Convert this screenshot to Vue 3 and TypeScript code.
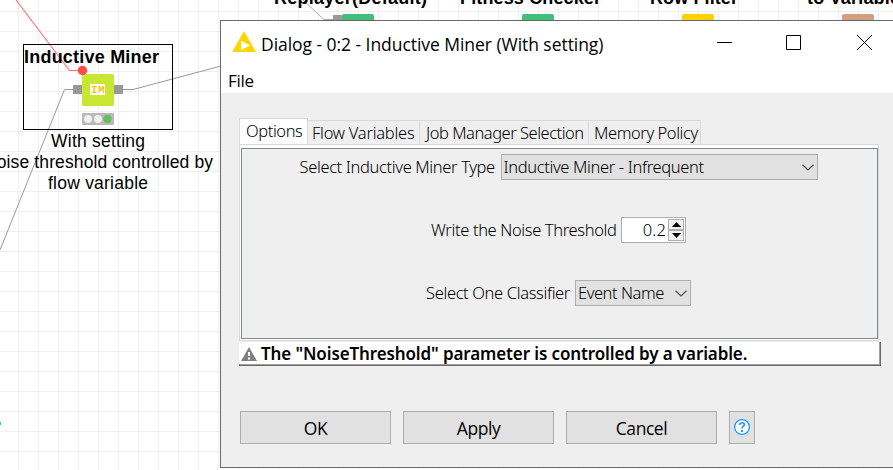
<script setup lang="ts">
import { ref } from 'vue'

interface PartialNode {
  label: string
  labelX: number
  labelWidth: number
  x: number
  color: string
}

const partialNodes: PartialNode[] = [
  { label: 'Replayer(Default)', labelX: 274, labelWidth: 153, x: 342, color: '#41be78' },
  { label: 'Fitness Checker', labelX: 460, labelWidth: 141, x: 522, color: '#41be78' },
  { label: 'Row Filter', labelX: 650, labelWidth: 88, x: 682, color: '#ffd100' },
  { label: 'to Variable', labelX: 807, labelWidth: 93, x: 842, color: '#d2a080' },
]

const tabs = [
  { id: 'options', label: 'Options' },
  { id: 'flow', label: 'Flow Variables' },
  { id: 'job', label: 'Job Manager Selection' },
  { id: 'memory', label: 'Memory Policy' },
]
const activeTab = ref('options')
const actions = ['OK', 'Apply', 'Cancel']
</script>

<template>
  <div class="screen">
    <svg class="canvas" width="893" height="470" viewBox="0 0 893 470">
      <defs>
        <pattern id="grid" width="20" height="20" x="18" y="11" patternUnits="userSpaceOnUse">
          <path d="M0 0h20v1H1v19H0z" fill="#efefef" />
        </pattern>
      </defs>
      <rect width="893" height="470" fill="#fff" />
      <rect width="893" height="470" fill="url(#grid)" />

      <g fill="none" stroke="#999" stroke-width="1">
        <path d="M0 250L64.500 89.500H74" />
        <path d="M122 89.500H133L221 66" />
        <path d="M303 0L324 19.500H334" stroke="#aaa" />
      </g>
      <path d="M16 0L69.500 70.500H80" fill="none" stroke="#ff7070" stroke-width="1.100" />

      <g class="node-name">
        <text x="24" y="63" textLength="135">Inductive Miner</text>
        <text v-for="n in partialNodes" :key="n.label" :x="n.labelX" y="4" :textLength="n.labelWidth">{{ n.label }}</text>
      </g>
      <rect x="333" y="15" width="9" height="9" fill="#999" />
      <rect v-for="n in partialNodes" :key="n.x" :x="n.x" y="14" width="32" height="32" rx="2" :fill="n.color" />

      <rect x="23.500" y="44.500" width="149" height="85" fill="none" stroke="#000" />
      <rect x="73" y="85" width="9" height="9" fill="#999" />
      <rect x="114" y="85" width="9" height="9" fill="#999" />
      <rect x="82" y="74" width="32" height="32" rx="1.500" fill="#c8e632" />
      <circle cx="82.500" cy="70.500" r="4.700" fill="#ff4b4b" />
      <rect x="90" y="84" width="15" height="11" fill="#fff" />
      <text class="node-glyph" x="91" y="93" textLength="13.500">IM</text>
      <rect x="82" y="113" width="32" height="12" rx="1" fill="#b9b9b9" />
      <circle cx="88" cy="119" r="4" fill="#f0f0f0" />
      <circle cx="98" cy="119" r="4" fill="#f0f0f0" />
      <circle cx="107.500" cy="119" r="4.200" fill="#64be5a" />

      <g class="node-note">
        <text x="51" y="147" textLength="94">With setting</text>
        <text x="-16" y="168" textLength="229">Noise threshold controlled by</text>
        <text x="48" y="189" textLength="100">flow variable</text>
      </g>
      <rect x="0" y="422" width="1" height="3" fill="#2ab4ff" />
    </svg>

    <section class="dialog">
      <header class="titlebar">
        <svg class="logo" width="26" height="24" viewBox="0 0 26 24">
          <path d="M13 1L25 22H1z" fill="#ffd500" />
          <path d="M10 10.500L19 15.500L10 20z" fill="#fff" />
        </svg>
        <h1 class="title">Dialog - 0:2 - Inductive Miner (With setting)</h1>
        <div class="window-controls">
          <svg width="15" height="15" viewBox="0 0 15 15"><path d="M0 7.500H15" /></svg>
          <svg width="15" height="15" viewBox="0 0 15 15"><path d="M.5.5h14v14H.5z" /></svg>
          <svg width="15" height="15" viewBox="0 0 15 15"><path d="M0 0L15 15M15 0L0 15" /></svg>
        </div>
      </header>
      <nav class="menubar"><span>File</span></nav>

      <div class="body">
        <div class="tabs">
          <div
            v-for="t in tabs"
            :key="t.id"
            class="tab"
            :class="[t.id, { active: activeTab === t.id }]"
            @click="activeTab = t.id"
          ><span>{{ t.label }}</span></div>
        </div>
        <div class="pane">
          <div class="pane-inner">
            <div class="row">
              <span class="l1">Select Inductive Miner Type</span>
              <div class="combo wide">
                <span class="v1">Inductive Miner - Infrequent</span>
                <svg width="12" height="7" viewBox="0 0 12 7"><path d="M.5.7L6 6L11.500.7" /></svg>
              </div>
            </div>
            <div class="row">
              <span class="l2">Write the Noise Threshold</span>
              <div class="spinner">
                <span class="number">0.2</span>
                <div class="steps">
                  <div class="step"><svg width="9" height="5" viewBox="0 0 9 5"><path d="M4.500 0L9 5H0z" /></svg></div>
                  <div class="step"><svg width="9" height="5" viewBox="0 0 9 5"><path d="M4.500 5L9 0H0z" /></svg></div>
                </div>
              </div>
            </div>
            <div class="row">
              <span class="l3">Select One Classifier</span>
              <div class="combo narrow">
                <span class="v3">Event Name</span>
                <svg width="12" height="7" viewBox="0 0 12 7"><path d="M.5.7L6 6L11.500.7" /></svg>
              </div>
            </div>
          </div>
        </div>

        <div class="status">
          <svg width="16" height="14" viewBox="0 0 16 14">
            <path d="M8 0L16 14H0z" fill="#808080" />
            <path d="M7 5h2v4H7zM7 10.500h2v2H7z" fill="#fff" />
          </svg>
          <span>The "NoiseThreshold" parameter is controlled by a variable.</span>
        </div>

        <footer class="actions">
          <button v-for="a in actions" :key="a" class="btn" :class="a.toLowerCase()"><span>{{ a }}</span></button>
          <button class="btn help">
            <svg width="18" height="18" viewBox="0 0 18 18">
              <circle cx="9" cy="9" r="7.400" fill="#fff" stroke="#1e9bff" stroke-width="1.300" />
              <path d="M6.700 7V6.400C6.700 4.200 11.400 4.100 11.400 6.500C11.400 8.300 9 8.300 9 10.500" fill="none" stroke="#1e9bff" stroke-width="1.700" />
              <rect x="8" y="12" width="2" height="2" fill="#1e9bff" />
            </svg>
          </button>
        </footer>
      </div>
    </section>
  </div>
</template>

<style>
body {
  margin: 0;
  overflow: hidden;
}
</style>

<style scoped>
.screen {
  position: relative;
  width: 893px;
  height: 470px;
  overflow: hidden;
  color: #000;
}
.canvas {
  display: block;
}
.node-name {
  font: bold 18px 'Liberation Sans', sans-serif;
}
.node-note {
  font: 17.5px 'Liberation Sans', sans-serif;
}
.node-glyph {
  font: bold 11px 'Liberation Mono', monospace;
  fill: #f0c814;
}
.dialog {
  position: absolute;
  left: 220px;
  top: 20px;
  box-sizing: border-box;
  width: 690px;
  height: 448px;
  border: 1px solid #696969;
  background: #efefef;
  font: 300 16.5px/20px 'Noto Sans', sans-serif;
  letter-spacing: -0.36px;
  white-space: nowrap;
}
.titlebar {
  display: flex;
  align-items: center;
  height: 44px;
  padding-left: 10px;
  background: #fff;
  font-family: 'Open Sans', sans-serif;
}
.logo {
  flex: none;
  margin-top: -2px;
}
.title {
  flex: none;
  width: 445px;
  margin: 2px 0 0 4px;
  font-size: 17.5px;
  font-weight: 400;
  letter-spacing: -0.05px;
}
.window-controls {
  display: flex;
  margin: -1px 0 0 11px;
}
.window-controls svg {
  flex: none;
  fill: none;
  stroke: #000;
  stroke-width: 1;
}
.window-controls svg:nth-child(2) {
  margin: 0 56px 0 54px;
}
.menubar {
  height: 28px;
  padding-left: 7px;
  background: #fff;
  font: 400 17px/31px 'Open Sans', sans-serif;
  letter-spacing: -0.3px;
}
.body {
  padding: 25px 0 0 18px;
}
.tabs {
  display: flex;
  align-items: flex-end;
  height: 26px;
  letter-spacing: -0.42px;
}
.tab {
  box-sizing: border-box;
  height: 24px;
  border: 1px solid #d9d9d9;
  border-width: 1px 1px 0 0;
  line-height: 24px;
  padding-left: 4px;
}
.tab.active {
  height: 26px;
  border-left-width: 1px;
  padding-left: 6px;
  background: #fff;
}
.tab.options { width: 69px; }
.tab.flow { width: 112px; letter-spacing: -0.25px; }
.tab.job { width: 169px; padding-left: 6px; letter-spacing: -0.48px; }
.tab.memory { width: 112px; padding-left: 5px; }
.pane {
  box-sizing: border-box;
  width: 640px;
  height: 197px;
  padding: 3px 0 1px 1px;
  border: 1px solid #d9d9d9;
  background: #fff;
}
.pane-inner {
  box-sizing: border-box;
  height: 191px;
  padding: 5px 2px 0 0;
  border: 1px solid #828790;
  background: #efefef;
}
.row {
  display: flex;
  align-items: center;
  justify-content: center;
  gap: 6px;
  height: 26px;
  margin-bottom: 37px;
}
.l1 { width: 195px; }
.l2 { width: 184px; }
.l3 { width: 143px; }
.combo,
.spinner {
  display: flex;
  align-items: center;
  box-sizing: border-box;
  height: 26px;
  border: 1px solid #adadb2;
}
.combo {
  justify-content: space-between;
  padding: 0 3px 0 2px;
  background: #e1e1e1;
}
.combo svg {
  fill: none;
  stroke: #505050;
  stroke-width: 1.2;
}
.wide { width: 317px; }
.narrow { width: 116px; letter-spacing: -0.45px; }
.spinner {
  justify-content: flex-end;
  width: 65px;
  padding-right: 1px;
  background: #fff;
}
.number {
  margin-right: 2px;
  letter-spacing: 0.1px;
}
.steps {
  display: flex;
  flex-direction: column;
  width: 16px;
  height: 22px;
}
.step {
  display: flex;
  flex: 1;
  align-items: center;
  justify-content: center;
  border: 1px solid #adadad;
  background: #f0f0f0;
}
.status {
  display: flex;
  align-items: center;
  gap: 4px;
  box-sizing: border-box;
  width: 642px;
  height: 24px;
  margin-top: 1px;
  padding-left: 2px;
  background: #fff;
  border-right: 1px solid #696969;
  border-bottom: 1px solid #696969;
  box-shadow: inset -1px -1px #a0a0a0;
  font-size: 17px;
  font-weight: 600;
  letter-spacing: -0.12px;
}
.actions {
  display: flex;
  gap: 12px;
  padding: 45px 0 0 1px;
}
.btn {
  display: flex;
  align-items: center;
  justify-content: center;
  box-sizing: border-box;
  width: 151px;
  height: 33px;
  padding: 1px 0 0;
  border: 1px solid #adadad;
  background: #e1e1e1;
  color: #000;
  font: 400 17.5px/20px 'Open Sans', sans-serif;
  letter-spacing: -0.45px;
}
.btn.help {
  width: 26px;
  padding: 0 0 1px;
}
</style>
